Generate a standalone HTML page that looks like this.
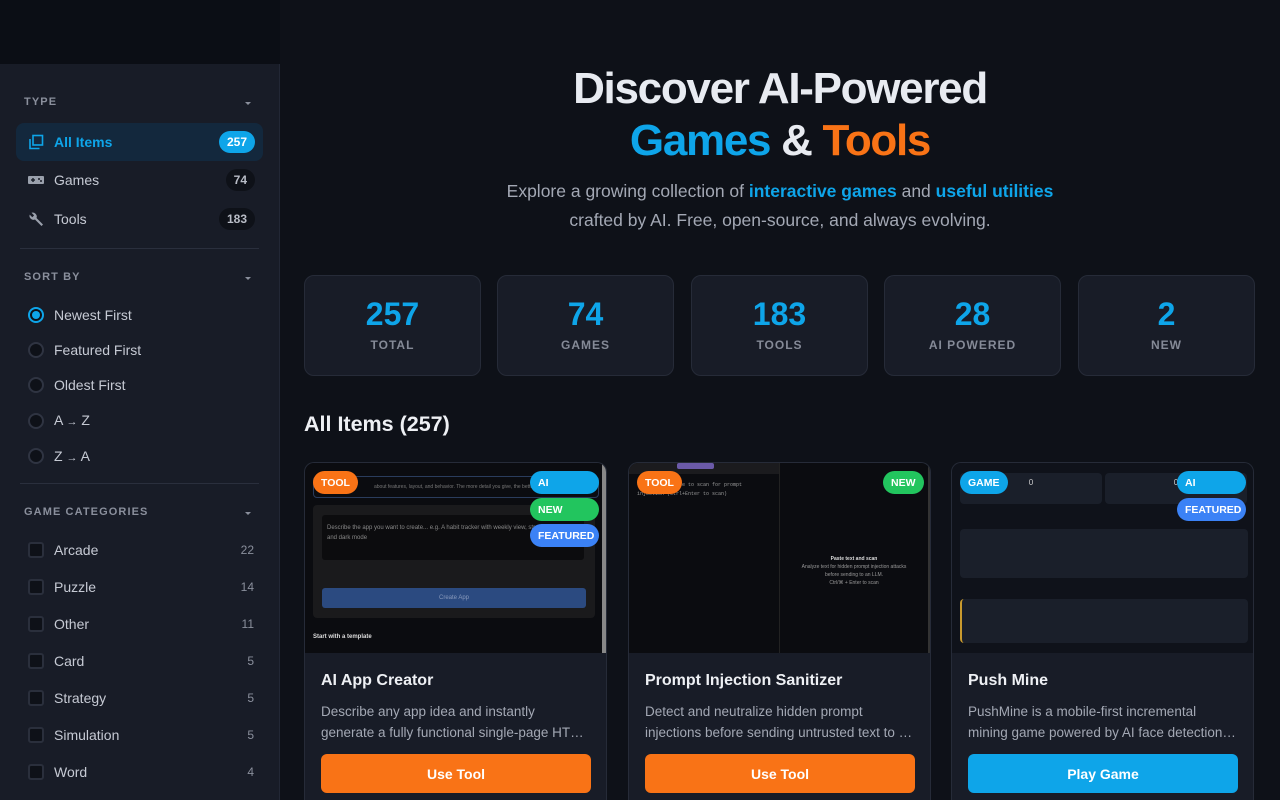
<!DOCTYPE html>
<html style="overflow:hidden;height:800px"><head><meta charset="utf-8"><style>
*{box-sizing:border-box;margin:0;padding:0}
body{width:1280px;height:800px;overflow:hidden;background:#0e1118;font-family:"Liberation Sans",sans-serif;position:relative;color:#e6e8ee}
.abs{position:absolute}
.top{left:0;top:0;width:280px;height:64px;background:#0b0e15}
.side{left:0;top:64px;width:280px;height:736px;background:#181c27;border-right:1px solid #222735}
.sh{position:absolute;left:24px;font-size:11px;font-weight:bold;letter-spacing:1.1px;color:#8a8f9c}
.car{position:absolute;left:245px;width:0;height:0;border-left:3px solid transparent;border-right:3px solid transparent;border-top:3px solid #8a8f9c}
.item{position:absolute;left:16px;width:247px;height:38px;border-radius:8px;display:flex;align-items:center;padding-left:38px;font-size:14px;color:#c6cad4}
.item.act{background:#13283d;color:#0ea5e9;font-weight:bold}
.cnt{position:absolute;right:8px;top:8px;height:22px;border-radius:11px;background:#0e1118;color:#b8bcc6;font-size:12px;font-weight:bold;display:flex;align-items:center;padding:0 8px}
.act .cnt{background:#0ea5e9;color:#fff}
.ico{position:absolute;left:12px;top:11px}
.hr{position:absolute;left:20px;width:239px;height:1px;background:#2a2f3d}
.radio{position:absolute;left:28px;width:16px;height:16px;border-radius:50%;border:2px solid #2f3442;background:#0e1118}
.radio.on{border-color:#0ea5e9}
.radio.on::after{content:"";position:absolute;left:2px;top:2px;width:8px;height:8px;border-radius:50%;background:#0ea5e9}
.rl{position:absolute;left:54px;font-size:14px;color:#c6cad4}
.cb{position:absolute;left:28px;width:16px;height:16px;border-radius:3px;border:2px solid #2a2f3c;background:#0e1118}
.cn{position:absolute;right:25px;font-size:12px;color:#8a8f9c}
h1{position:absolute;left:280px;width:1000px;top:63px;text-align:center;font-size:44px;line-height:52px;font-weight:bold;letter-spacing:-1.3px;color:#e8ebf1}
.sub{position:absolute;left:280px;width:1000px;top:177px;text-align:center;font-size:17.5px;line-height:29px;color:#a3a8b4}
.sub b{color:#0ea5e9}
.stat{position:absolute;top:275px;width:177px;height:101px;background:#181c27;border:1px solid #262b38;border-radius:10px;text-align:center}
.stat .n{margin-top:20px;font-size:32px;font-weight:bold;color:#0ea5e9;line-height:36px}
.stat .l{margin-top:6px;font-size:12px;font-weight:bold;letter-spacing:1px;color:#858a97}
h2{position:absolute;left:304px;top:412px;font-size:21.5px;color:#eef0f4}
.card{position:absolute;top:462px;width:303px;height:338px;background:#181c27;border:1px solid #262b38;border-bottom:none;border-radius:10px 10px 0 0;overflow:hidden}
.img{position:absolute;left:0;top:0;width:100%;height:190px;background:#0b0c10}
.tag{position:absolute;height:23px;border-radius:12px;color:#fff;font-size:10.5px;font-weight:bold;display:flex;align-items:center;padding:0 8px;white-space:nowrap}
.tt{position:absolute;left:16px;top:209px;font-size:16px;font-weight:bold;color:#eef0f4}
.dd{position:absolute;left:16px;top:238px;width:270px;font-size:13.5px;line-height:21px;color:#a3a8b4;display:-webkit-box;-webkit-line-clamp:2;-webkit-box-orient:vertical;overflow:hidden}
.btn{position:absolute;left:16px;top:291px;width:270px;height:39px;border-radius:6px;color:#fff;font-weight:bold;font-size:14px;display:flex;align-items:center;justify-content:center}
</style></head><body>
<div class="abs top"></div>
<div class="abs side">
<div class="sh" style="top:32px">TYPE</div><div class="car" style="top:38px"></div>
<div class="item act" style="top:59px"><svg class="ico" width="16" height="16" viewBox="0 0 16 16" fill="none" stroke="#0ea5e9" stroke-width="1.6"><rect x="5" y="1.5" width="9.5" height="9.5"/><path d="M2 5v9.5h9.5"/></svg>All Items<span class="cnt">257</span></div>
<div class="item" style="top:97px"><svg class="ico" width="16" height="16" viewBox="0 0 16 16"><rect x="0" y="4" width="16" height="8" rx="1" fill="#9aa0ac"/><rect x="3" y="7.3" width="4" height="1.4" fill="#181c27"/><rect x="4.3" y="6" width="1.4" height="4" fill="#181c27"/><circle cx="11" cy="7" r="1" fill="#181c27"/><circle cx="13" cy="9" r="1" fill="#181c27"/></svg>Games<span class="cnt">74</span></div>
<div class="item" style="top:136px"><svg class="ico" width="16" height="16" viewBox="0 0 16 16"><path d="M15 13.5L8.5 7a4 4 0 0 0-5-5.2l2.6 2.6-1.8 1.8L1.7 3.6A4 4 0 0 0 7 8.5l6.5 6.5z" fill="#9aa0ac"/></svg>Tools<span class="cnt">183</span></div>
<div class="hr" style="top:184px"></div>
<div class="sh" style="top:207px">SORT BY</div><div class="car" style="top:213px"></div>
<div class="radio on" style="top:243px"></div><div class="rl" style="top:243px">Newest First</div>
<div class="radio" style="top:278px"></div><div class="rl" style="top:278px">Featured First</div>
<div class="radio" style="top:313px"></div><div class="rl" style="top:313px">Oldest First</div>
<div class="radio" style="top:349px"></div><div class="rl" style="top:348px">A <span style="font-size:11px">→</span> Z</div>
<div class="radio" style="top:384px"></div><div class="rl" style="top:384px">Z <span style="font-size:11px">→</span> A</div>
<div class="hr" style="top:419px"></div>
<div class="sh" style="top:442px">GAME CATEGORIES</div><div class="car" style="top:448px"></div>
<div class="cb" style="top:478px"></div><div class="rl" style="top:478px">Arcade</div><div class="cn" style="top:479px">22</div>
<div class="cb" style="top:515px"></div><div class="rl" style="top:515px">Puzzle</div><div class="cn" style="top:516px">14</div>
<div class="cb" style="top:552px"></div><div class="rl" style="top:552px">Other</div><div class="cn" style="top:553px">11</div>
<div class="cb" style="top:589px"></div><div class="rl" style="top:589px">Card</div><div class="cn" style="top:590px">5</div>
<div class="cb" style="top:626px"></div><div class="rl" style="top:626px">Strategy</div><div class="cn" style="top:627px">5</div>
<div class="cb" style="top:663px"></div><div class="rl" style="top:663px">Simulation</div><div class="cn" style="top:664px">5</div>
<div class="cb" style="top:700px"></div><div class="rl" style="top:700px">Word</div><div class="cn" style="top:701px">4</div>
</div>

<h1>Discover AI-Powered<br><span style="color:#0ea5e9">Games</span> &amp; <span style="color:#f97316">Tools</span></h1>
<div class="sub">Explore a growing collection of <b>interactive games</b> and <b>useful utilities</b><br>crafted by AI. Free, open-source, and always evolving.</div>

<div class="stat" style="left:304px"><div class="n">257</div><div class="l">TOTAL</div></div>
<div class="stat" style="left:497px"><div class="n">74</div><div class="l">GAMES</div></div>
<div class="stat" style="left:691px"><div class="n">183</div><div class="l">TOOLS</div></div>
<div class="stat" style="left:884px"><div class="n">28</div><div class="l">AI POWERED</div></div>
<div class="stat" style="left:1078px"><div class="n">2</div><div class="l">NEW</div></div>

<h2>All Items (257)</h2>

<div class="card" style="left:304px"><div class="img">
<div class="abs" style="left:8px;top:13px;width:286px;height:22px;border:1px solid #2a3c5c;border-radius:4px;font-size:5px;color:#777;padding:7px 60px;white-space:nowrap;overflow:hidden">about features, layout, and behavior. The more detail you give, the better</div>
<div class="abs" style="left:8px;top:42px;width:282px;height:113px;background:#1a1a1c;border-radius:4px"></div>
<div class="abs" style="left:17px;top:52px;width:262px;height:45px;background:#0c0c0e;border-radius:3px;font-size:6px;color:#888;padding:8px 5px;line-height:10px">Describe the app you want to create... e.g. A habit tracker with weekly view, streak counter, and dark mode</div>
<div class="abs" style="left:17px;top:125px;width:264px;height:20px;background:#2b4a80;border-radius:3px;font-size:6px;color:#8899bb;text-align:center;line-height:20px">Create App</div>
<div class="abs" style="left:8px;top:171px;font-size:6px;color:#ddd;font-weight:bold">Start with a template</div>
<div class="abs" style="left:297px;top:0;width:4px;height:190px;background:#888"></div>
</div>
<div class="tag" style="left:8px;top:8px;background:#f97316">TOOL</div>
<div class="tag" style="left:225px;top:8px;width:69px;background:#0ea5e9">AI</div>
<div class="tag" style="left:225px;top:35px;width:69px;background:#22c55e">NEW</div>
<div class="tag" style="left:225px;top:61px;width:69px;background:#3b82f6">FEATURED</div>
<div class="tt">AI App Creator</div>
<div class="dd">Describe any app idea and instantly generate a fully functional single-page HTML app in seconds</div>
<div class="btn" style="background:#f97316">Use Tool</div></div>

<div class="card" style="left:628px"><div class="img">
<div class="abs" style="left:0;top:0;width:150px;height:11px;background:#1b1b1e"></div>
<div class="abs" style="left:48px;top:0;width:37px;height:6px;background:#6b5aa8;border-radius:2px"></div>
<div class="abs" style="left:150px;top:0;width:1px;height:190px;background:#222"></div>
<div class="abs" style="left:8px;top:18px;font-family:'Liberation Mono',monospace;font-size:5px;color:#999;line-height:9px">| or drop a file to scan for prompt<br>injection (Ctrl+Enter to scan)</div>
<div class="abs" style="left:150px;top:92px;width:150px;text-align:center;font-size:5px;color:#999;line-height:8px"><b style="color:#ddd">Paste text and scan</b><br>Analyze text for hidden prompt injection attacks<br>before sending to an LLM.<br>Ctrl/⌘ + Enter to scan</div>
<div class="abs" style="left:299px;top:0;width:3px;height:190px;background:#333"></div>
</div>
<div class="tag" style="left:8px;top:8px;background:#f97316">TOOL</div>
<div class="tag" style="left:254px;top:8px;background:#22c55e">NEW</div>
<div class="tt">Prompt Injection Sanitizer</div>
<div class="dd">Detect and neutralize hidden prompt injections before sending untrusted text to an LLM</div>
<div class="btn" style="background:#f97316">Use Tool</div></div>

<div class="card" style="left:951px"><div class="img" style="background:#0f121a">
<div class="abs" style="left:8px;top:10px;width:142px;height:31px;background:#1a1f2a;border-radius:4px;text-align:center;font-size:8px;color:#ccc;padding-top:5px">0</div>
<div class="abs" style="left:153px;top:10px;width:142px;height:31px;background:#1a1f2a;border-radius:4px;text-align:center;font-size:8px;color:#ccc;padding-top:5px">0</div>
<div class="abs" style="left:8px;top:66px;width:288px;height:49px;background:#1a1f2a;border-radius:4px"></div>
<div class="abs" style="left:8px;top:136px;width:288px;height:44px;background:#1a1f2a;border-left:2px solid #c99a2e;border-radius:4px"></div>
<div class="abs" style="left:301px;top:0;width:2px;height:80px;background:#444"></div>
</div>
<div class="tag" style="left:8px;top:8px;background:#0ea5e9">GAME</div>
<div class="tag" style="left:225px;top:8px;width:69px;background:#0ea5e9">AI</div>
<div class="tag" style="left:225px;top:35px;width:69px;background:#3b82f6">FEATURED</div>
<div class="tt">Push Mine</div>
<div class="dd">PushMine is a mobile-first incremental mining game powered by AI face detection push-ups</div>
<div class="btn" style="background:#0ea5e9">Play Game</div></div>
</body></html>
